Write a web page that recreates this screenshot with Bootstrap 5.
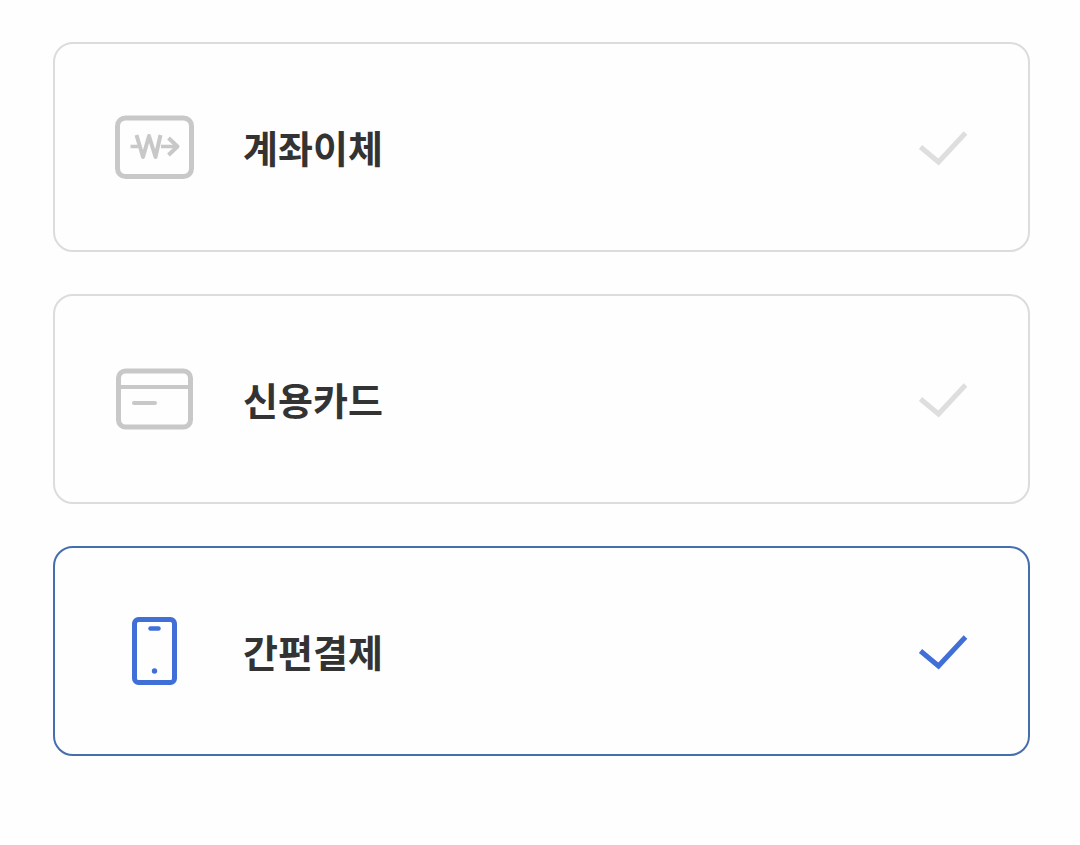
<!DOCTYPE html>
<html lang="ko">
<head>
<meta charset="utf-8">
<meta name="viewport" content="width=device-width, initial-scale=1">
<title>결제 수단</title>
<link href="https://cdn.jsdelivr.net/npm/bootstrap@5.3.0/dist/css/bootstrap.min.css" rel="stylesheet">
<style>
  body { background: #fefefe; color: #333; font-family: "Noto Sans CJK KR", sans-serif; }
  .pay-list { padding: 42px 50px 42px 53px; gap: 42px; }
  .pay-option {
    min-height: 210px;
    padding: 0 60px;
    border: 2px solid #dcdcdc;
    border-radius: 20px;
    background: #fefefe;
    cursor: pointer;
  }
  .pay-icon { width: 80px; height: 80px; margin-right: 48px; color: #c8c8c8; }
  .pay-name { font-size: 38px; line-height: 56px; }
  .pay-check { width: 50px; height: 40px; color: #dedede; }
  .btn-check:checked + .pay-option { border-color: #446eae; }
  .btn-check:checked + .pay-option .pay-icon,
  .btn-check:checked + .pay-option .pay-check { color: #416fd8; }
  .btn-check:focus-visible + .pay-option { box-shadow: 0 0 0 4px #416fd840; }
</style>
</head>
<body>
<main class="pay-list d-flex flex-column" role="radiogroup" aria-label="결제 수단">
  <div>
    <input class="btn-check" type="radio" name="pay" id="pay-transfer">
    <label class="pay-option d-flex align-items-center" for="pay-transfer">
      <svg class="pay-icon flex-shrink-0" viewBox="0 0 80 80" fill="none" stroke="currentColor" stroke-linejoin="round" aria-hidden="true">
        <rect x="2.500" y="11" width="74" height="58.500" rx="8" stroke-width="5"/>
        <path d="M15.500 39.500H23M46 39.500H62" stroke-width="3.500"/>
        <path d="M21.500 28L28 50L34 29L40.500 50L45.500 28" stroke-width="4"/>
        <path d="M53.500 31L62.500 39.500L53.500 48" stroke-width="4"/>
      </svg>
      <span class="pay-name fw-bold">계좌이체</span>
      <svg class="pay-check flex-shrink-0 ms-auto" viewBox="0 0 50 40" fill="none" stroke="currentColor" stroke-width="5" aria-hidden="true"><path d="M2.500 20L20.500 35L47.500 6"/></svg>
    </label>
  </div>
  <div>
    <input class="btn-check" type="radio" name="pay" id="pay-card">
    <label class="pay-option d-flex align-items-center" for="pay-card">
      <svg class="pay-icon flex-shrink-0" viewBox="0 0 80 80" fill="none" stroke="currentColor" aria-hidden="true">
        <rect x="3.500" y="12" width="72" height="56" rx="7" stroke-width="5"/>
        <path d="M4 28H75" stroke-width="4"/>
        <path d="M19 44H40" stroke-width="4" stroke-linecap="round"/>
      </svg>
      <span class="pay-name fw-bold">신용카드</span>
      <svg class="pay-check flex-shrink-0 ms-auto" viewBox="0 0 50 40" fill="none" stroke="currentColor" stroke-width="5" aria-hidden="true"><path d="M2.500 20L20.500 35L47.500 6"/></svg>
    </label>
  </div>
  <div>
    <input class="btn-check" type="radio" name="pay" id="pay-easy" checked>
    <label class="pay-option d-flex align-items-center" for="pay-easy">
      <svg class="pay-icon flex-shrink-0" viewBox="0 0 80 80" fill="none" stroke="currentColor" aria-hidden="true">
        <rect x="19.500" y="8.500" width="40" height="63" rx="4" stroke-width="5"/>
        <path d="M35.500 17.500H43.500" stroke-width="4.500" stroke-linecap="round"/>
        <circle cx="39.500" cy="60" r="2.700" fill="currentColor" stroke="none"/>
      </svg>
      <span class="pay-name fw-bold">간편결제</span>
      <svg class="pay-check flex-shrink-0 ms-auto" viewBox="0 0 50 40" fill="none" stroke="currentColor" stroke-width="5" aria-hidden="true"><path d="M2.500 20L20.500 35L47.500 6"/></svg>
    </label>
  </div>
</main>
<script src="https://cdn.jsdelivr.net/npm/bootstrap@5.3.0/dist/js/bootstrap.bundle.min.js"></script>
</body>
</html>
